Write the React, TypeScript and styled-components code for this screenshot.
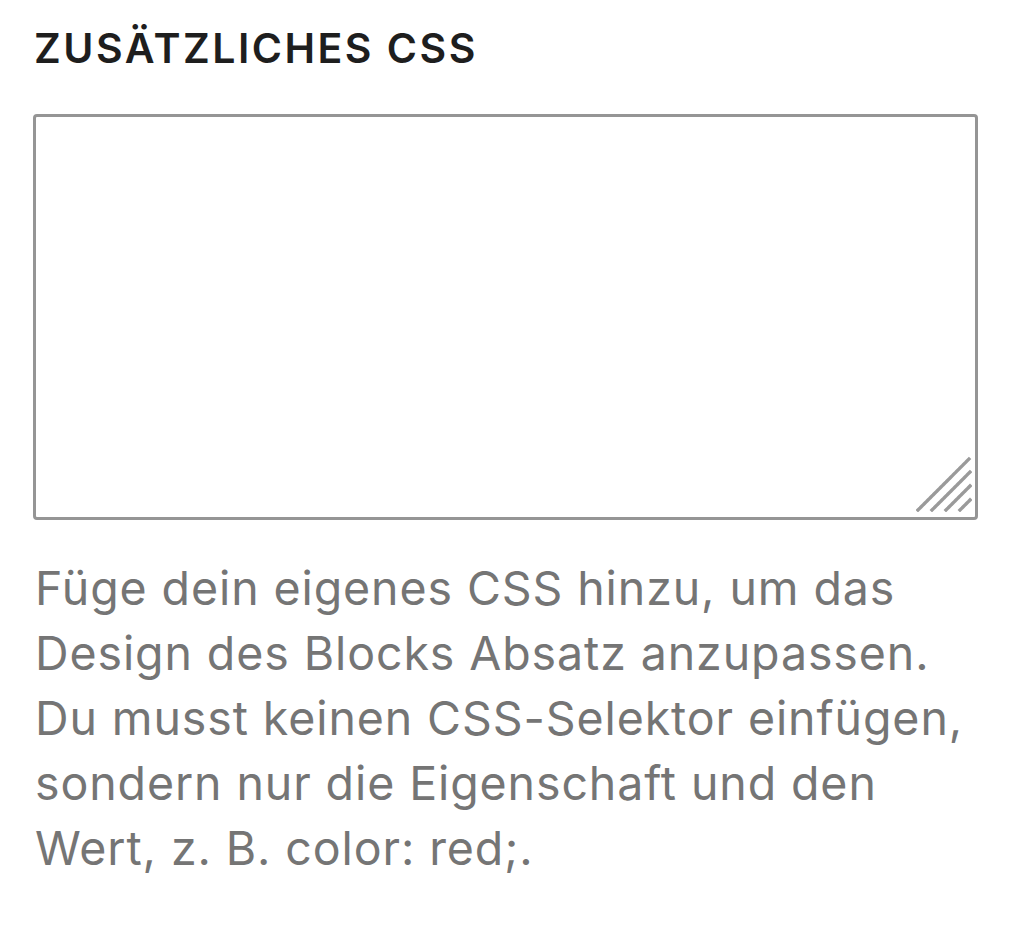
import React from "react";
import styled, { createGlobalStyle } from "styled-components";

const GlobalStyle = createGlobalStyle`
  html, body {
    margin: 0;
    padding: 0;
    background: #ffffff;
  }
  body {
    font-family: Inter, "Liberation Sans", Arial, sans-serif;
  }
`;

const Panel = styled.section`
  box-sizing: border-box;
  width: 1024px;
  padding: 24px 46px 0 33px;
  display: flex;
  flex-direction: column;
`;

const Heading = styled.h2`
  margin: 0 0 0 1px;
  font-family: Inter, "Liberation Sans", Arial, sans-serif;
  font-size: 41px;
  line-height: 48px;
  font-weight: 600;
  letter-spacing: 2.5px;
  text-transform: uppercase;
  color: #1e1e1e;
`;

const FieldWrap = styled.div`
  position: relative;
  margin-top: 42px;
  width: 945px;
  height: 406px;
`;

const CodeArea = styled.textarea`
  box-sizing: border-box;
  display: block;
  width: 100%;
  height: 100%;
  margin: 0;
  padding: 16px;
  border: 3.5px solid #959595;
  border-radius: 4px;
  background: #ffffff;
  resize: none;
  outline: none;
  font-family: "Liberation Mono", monospace;
  font-size: 40px;
  color: #1e1e1e;
`;

const ResizeGrip = styled.svg`
  position: absolute;
  right: 6px;
  bottom: 8px;
  width: 56px;
  height: 56px;
  pointer-events: none;
`;

const Help = styled.p`
  margin: 36px 0 0 2px;
  width: 944px;
  font-family: Inter, "Liberation Sans", Arial, sans-serif;
  font-size: 46.5px;
  line-height: 65px;
  font-weight: 400;
  letter-spacing: 0.9px;
  color: #757575;
`;

export default function App() {
  return (
    <>
      <GlobalStyle />
      <Panel>
        <Heading>Zusätzliches CSS</Heading>
        <FieldWrap>
          <CodeArea aria-label="Zusätzliches CSS" spellCheck={false} />
          <ResizeGrip viewBox="0 0 56 56" aria-hidden="true">
            <g stroke="#9a9a9a" strokeWidth="3.4" strokeLinecap="square" strokeDasharray="3 1.6">
              <line x1="2" y1="54" x2="54" y2="2" />
              <line x1="16" y1="54" x2="54" y2="16" />
              <line x1="30" y1="54" x2="54" y2="30" />
              <line x1="44" y1="54" x2="54" y2="44" />
            </g>
          </ResizeGrip>
        </FieldWrap>
        <Help>
          Füge dein eigenes CSS hinzu, um das Design des Blocks Absatz
          anzupassen. Du musst keinen CSS-Selektor einfügen, sondern nur die
          Eigenschaft und den Wert, z. B. color: red;.
        </Help>
      </Panel>
    </>
  );
}
